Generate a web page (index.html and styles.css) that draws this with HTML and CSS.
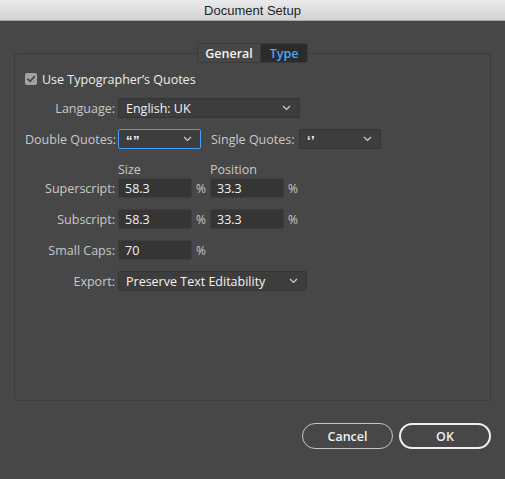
FILE: index.html
```html
<!DOCTYPE html>
<html>
<head>
<meta charset="utf-8">
<link rel="stylesheet" href="styles.css">
</head>
<body>
<div class="window">
  <div class="titlebar">Document Setup</div>
  <div class="content">
    <div class="panel">
      <div class="tabs">
        <div class="tab">General</div>
        <div class="tab active">Type</div>
      </div>
      <div class="check-row">
        <span class="checkbox">
          <svg width="12" height="12" viewBox="0 0 12 12"><path d="M2.8 6.2 L5 8.4 L9.4 3.6" fill="none" stroke="#4a4a4a" stroke-width="1.8" stroke-linecap="round" stroke-linejoin="round"/></svg>
        </span>
        <span class="check-label">Use Typographer’s Quotes</span>
      </div>
      <div class="row r-lang">
        <span class="label">Language:</span>
        <div class="select w-lang"><span>English: UK</span><svg class="chev" width="9" height="6" viewBox="0 0 9 6"><path d="M1 1 L4.5 4.5 L8 1" fill="none" stroke="#cfcfcf" stroke-width="1.2"/></svg></div>
      </div>
      <div class="row r-quotes">
        <span class="label">Double Quotes:</span>
        <div class="select w-dq focus"><span class="q">“”</span><svg class="chev" width="9" height="6" viewBox="0 0 9 6"><path d="M1 1 L4.5 4.5 L8 1" fill="none" stroke="#cfcfcf" stroke-width="1.2"/></svg></div>
        <span class="label2">Single Quotes:</span>
        <div class="select w-sq"><span class="q">‘’</span><svg class="chev" width="9" height="6" viewBox="0 0 9 6"><path d="M1 1 L4.5 4.5 L8 1" fill="none" stroke="#cfcfcf" stroke-width="1.2"/></svg></div>
      </div>
      <div class="row r-head">
        <span class="label"></span>
        <span class="head">Size</span>
        <span class="head">Position</span>
      </div>
      <div class="row r-sup">
        <span class="label">Superscript:</span>
        <div class="input">58.3</div><span class="pct">%</span>
        <div class="input">33.3</div><span class="pct">%</span>
      </div>
      <div class="row r-sub">
        <span class="label">Subscript:</span>
        <div class="input">58.3</div><span class="pct">%</span>
        <div class="input">33.3</div><span class="pct">%</span>
      </div>
      <div class="row r-caps">
        <span class="label">Small Caps:</span>
        <div class="input">70</div><span class="pct">%</span>
      </div>
      <div class="row r-export">
        <span class="label">Export:</span>
        <div class="select w-export"><span>Preserve Text Editability</span><svg class="chev" width="9" height="6" viewBox="0 0 9 6"><path d="M1 1 L4.5 4.5 L8 1" fill="none" stroke="#cfcfcf" stroke-width="1.2"/></svg></div>
      </div>
    </div>
    <div class="buttons">
      <div class="btn">Cancel</div>
      <div class="btn primary">OK</div>
    </div>
  </div>
</div>
</body>
</html>
```
FILE: styles.css
```css
* { box-sizing: border-box; }
html, body {
  margin: 0;
  padding: 0;
  background: #474747;
  width: 505px;
  height: 479px;
  overflow: hidden;
}
body {
  font-family: "Open Sans", "Noto Sans", sans-serif;
  font-size: 12.5px;
  color: #c9c9c9;
}
.window {
  display: flex;
  flex-direction: column;
  height: 479px;
}
.titlebar {
  height: 21px;
  background: linear-gradient(#ebebeb, #d2d2d2);
  border-bottom: 1px solid #a8a8a8;
  color: #1e1e1e;
  font-family: "Liberation Sans", Arial, sans-serif;
  font-size: 13px;
  display: flex;
  align-items: center;
  justify-content: center;
  padding-top: 1px;
}
.content {
  padding: 32px 14px 0 14px;
  display: flex;
  flex-direction: column;
}
.panel {
  height: 348px;
  border: 1px solid #3b3b3b;
  border-radius: 3px;
  display: flex;
  flex-direction: column;
  padding-left: 10px;
}
.tabs {
  align-self: center;
  margin-top: -11px;
  margin-left: -10px;
  display: flex;
  height: 20px;
  border: 1px solid #3a3a3a;
  border-radius: 3px;
  background: #474747;
  overflow: hidden;
}
.tab {
  display: flex;
  align-items: center;
  justify-content: center;
  font-size: 12.5px;
  font-weight: 600;
  color: #f2f2f2;
  height: 18px;
}
.tab:first-child {
  width: 63px;
  border-right: 1px solid #3a3a3a;
}
.tab.active {
  width: 46px;
  background: #2b2b2b;
  color: #4ea6f5;
}
.check-row {
  display: flex;
  align-items: center;
  height: 14px;
  margin-top: 9px;
}
.checkbox {
  width: 12px;
  height: 12px;
  border-radius: 2px;
  background: #a3a3a3;
  display: block;
}
.checkbox svg { display: block; }
.check-label {
  margin-left: 5px;
  color: #ededed;
  font-size: 12.5px;
}
.row {
  display: flex;
  align-items: center;
  height: 20px;
}
.label {
  width: 90px;
  text-align: right;
  margin-right: 3px;
  flex: none;
  white-space: nowrap;
}
.r-lang { margin-top: 12px; }
.r-quotes { margin-top: 11px; }
.r-head { margin-top: 11px; height: 18px; }
.r-sup { margin-top: 0; }
.r-sub, .r-caps, .r-export { margin-top: 11px; }
.select {
  height: 20px;
  background: #3d3d3d;
  border: 1px solid #353535;
  border-radius: 2px;
  display: flex;
  align-items: center;
  justify-content: space-between;
  padding: 0 8px 0 7px;
  color: #f3f3f3;
  font-size: 12.5px;
}
.select.focus {
  border: 1px solid #4a9ff2;
}
.select .chev { flex: none; }
.q {
  font-family: "Liberation Sans", Arial, sans-serif;
  font-size: 13px;
  font-weight: 700;
  letter-spacing: 0.5px;
  line-height: 1;
  padding-top: 3px;
}
.w-lang { width: 182px; }
.w-dq { width: 83px; }
.w-sq { width: 82px; }
.w-export { width: 189px; }
.label2 {
  margin-left: 10px;
  width: 85px;
  margin-right: 3px;
  white-space: nowrap;
}
.head {
  width: 92px;
  text-align: left;
  padding-left: 0;
  color: #c9c9c9;
}
.input {
  width: 74px;
  height: 20px;
  background: #353535;
  border: 1px solid #3e3e3e;
  border-radius: 2px;
  display: flex;
  align-items: center;
  padding-left: 6px;
  color: #f3f3f3;
  font-size: 12.5px;
}
.pct {
  width: 18px;
  padding-left: 4px;
  font-size: 12px;
}
.buttons {
  display: flex;
  justify-content: flex-end;
  gap: 6px;
  margin-top: 22px;
}
.btn {
  width: 91px;
  height: 26px;
  border-radius: 13px;
  border: 1.5px solid #c6c6c6;
  display: flex;
  align-items: center;
  justify-content: center;
  color: #f0f0f0;
  font-size: 12.5px;
  font-weight: 600;
}
.btn.primary {
  width: 92px;
  border: 2px solid #efefef;
}
```
